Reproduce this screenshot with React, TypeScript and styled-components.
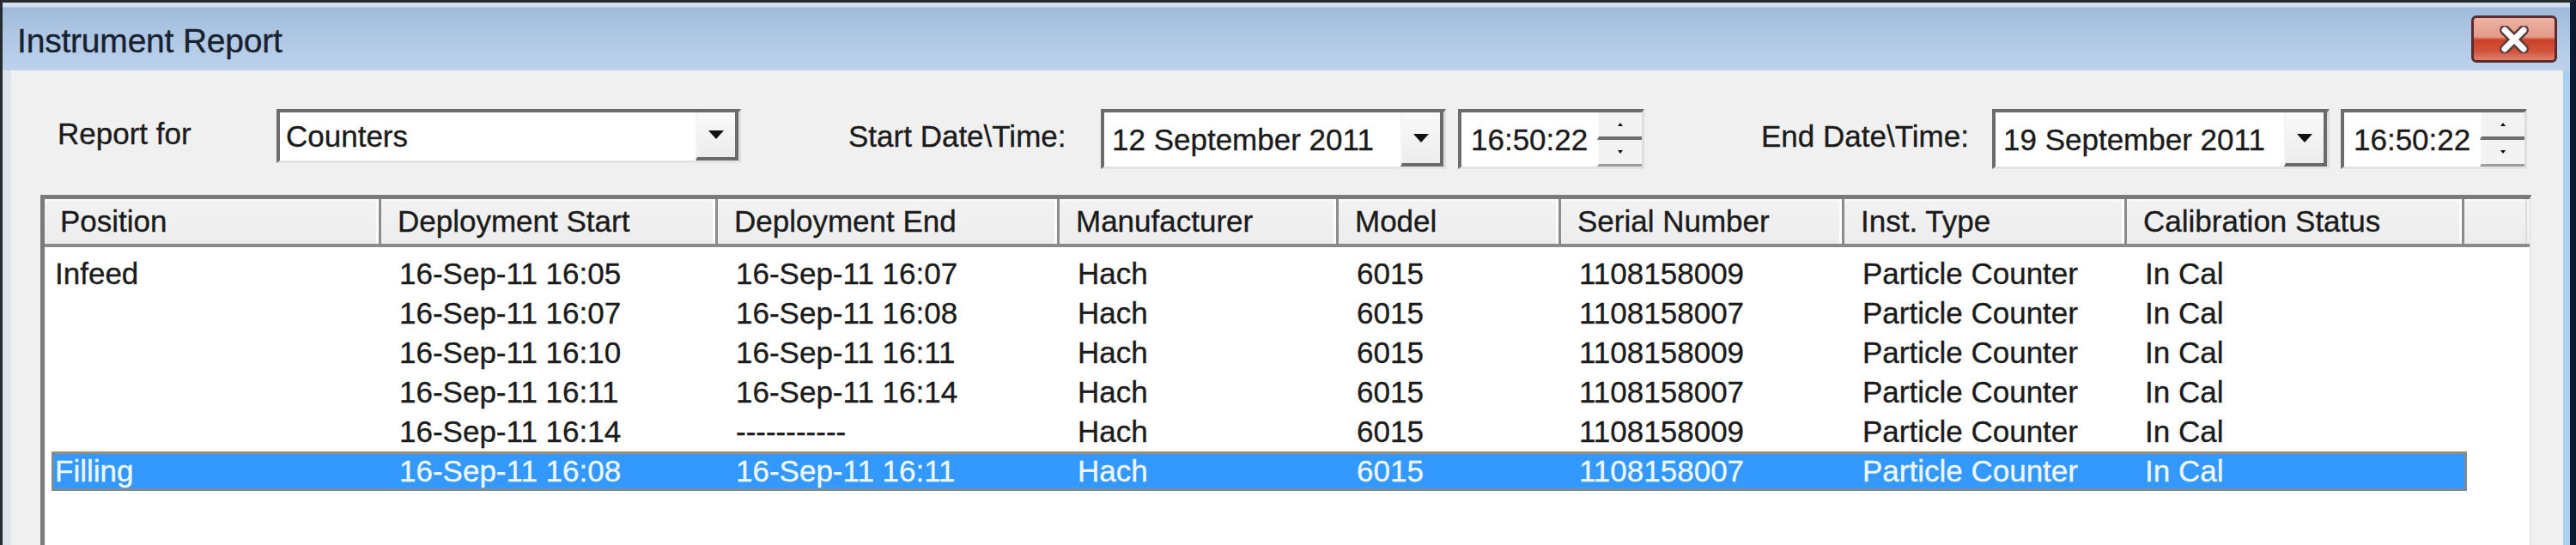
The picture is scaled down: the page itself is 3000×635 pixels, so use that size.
import React from 'react';
import styled, { createGlobalStyle } from 'styled-components';

const GlobalStyle = createGlobalStyle`
  html, body {
    margin: 0;
    padding: 0;
    background: #f0f0f0;
  }
  body {
    width: 3000px;
    height: 635px;
    overflow: hidden;
    font-family: 'Liberation Sans', Arial, sans-serif;
    -webkit-text-stroke: 0.35px currentColor;
  }
`;

const Window = styled.div`
  width: 3000px;
  height: 635px;
  box-sizing: border-box;
  border-top: 3px solid #262b31;
  border-left: 3px solid #262b31;
  border-right: 7px solid #0b1a33;
  display: flex;
  flex-direction: column;
  overflow: hidden;
`;

const TitleBar = styled.div`
  flex: none;
  height: 79px;
  box-sizing: border-box;
  padding: 6px 15px 0 17px;
  display: flex;
  align-items: center;
  justify-content: space-between;
  background: linear-gradient(
    180deg,
    #d5e0ec 0px,
    #d5e0ec 5px,
    #9fbadb 6px,
    #adc6e3 45%,
    #bdd3ec 100%
  );
`;

const Title = styled.span`
  font-size: 39px;
  color: #18212e;
  margin-top: 4px;
  letter-spacing: -0.2px;
`;

const CloseButton = styled.div`
  width: 100px;
  height: 55px;
  box-sizing: border-box;
  border: 3px solid #5b2b2e;
  border-radius: 6px;
  display: flex;
  align-items: center;
  justify-content: center;
  background: linear-gradient(
    180deg,
    #eeb2a4 0%,
    #e39a89 45%,
    #cc3f27 52%,
    #d2543d 80%,
    #e08470 100%
  );
`;

const Body = styled.div`
  flex: 1;
  display: flex;
  min-height: 0;
`;

const Frame = styled.div<{ $side: 'left' | 'right' }>`
  flex: none;
  width: ${(p) => (p.$side === 'left' ? '10px' : '8px')};
  background: ${(p) => (p.$side === 'left' ? '#dfe4ea' : '#a9d0f0')};
`;

const Content = styled.div`
  flex: 1;
  display: flex;
  flex-direction: column;
  background: #f0f0f0;
  padding-top: 45px;
  min-width: 0;
`;

const ControlsRow = styled.div`
  display: flex;
  align-items: flex-start;
  padding-left: 54px;
  font-size: 35px;
  color: #1b1b1b;
`;

const FieldLabel = styled.label<{ $width: number; $offset?: number; $height: number }>`
  flex: none;
  width: ${(p) => p.$width}px;
  height: ${(p) => p.$height}px;
  margin-left: ${(p) => p.$offset ?? 0}px;
  display: flex;
  align-items: center;
  padding-bottom: 6px;
  box-sizing: border-box;
  white-space: nowrap;
`;

const Sunken = styled.div<{ $width: number; $height: number; $offset?: number }>`
  flex: none;
  width: ${(p) => p.$width}px;
  height: ${(p) => p.$height}px;
  margin-left: ${(p) => p.$offset ?? 0}px;
  box-sizing: border-box;
  background: #fff;
  border-top: 4px solid #6c6c6c;
  border-left: 4px solid #6c6c6c;
  border-right: 3px solid #dedede;
  border-bottom: 3px solid #e4e4e4;
  display: flex;
  align-items: stretch;
`;

const FieldText = styled.span<{ $pad: number }>`
  flex: 1;
  display: flex;
  align-items: center;
  padding-left: ${(p) => p.$pad}px;
  white-space: nowrap;
  overflow: hidden;
`;

const DropButton = styled.div`
  flex: none;
  width: 50px;
  box-sizing: border-box;
  background: linear-gradient(180deg, #fafafa, #ececec);
  border-left: 2px solid #f4f4f4;
  border-right: 4px solid #6a6a6a;
  border-bottom: 4px solid #6a6a6a;
  display: flex;
  align-items: center;
  justify-content: center;
`;

const DownArrow = styled.span<{ $size: number }>`
  width: 0;
  height: 0;
  border-left: ${(p) => p.$size}px solid transparent;
  border-right: ${(p) => p.$size}px solid transparent;
  border-top: ${(p) => p.$size + 1}px solid #111;
`;

const UpArrow = styled.span<{ $size: number }>`
  width: 0;
  height: 0;
  border-left: ${(p) => p.$size}px solid transparent;
  border-right: ${(p) => p.$size}px solid transparent;
  border-bottom: ${(p) => p.$size + 1}px solid #111;
`;

const Spinner = styled.div`
  flex: none;
  width: 52px;
  display: flex;
  flex-direction: column;
`;

const SpinHalf = styled.div<{ $bottom: string }>`
  flex: 1;
  display: flex;
  align-items: center;
  justify-content: center;
  background: #f3f3f3;
  border-left: 2px solid #fbfbfb;
  border-bottom: ${(p) => p.$bottom};
`;

const ListView = styled.div`
  flex: 1;
  margin: 30px 37px 0 34px;
  background: #fff;
  border-top: 5px solid #7a7a7a;
  border-left: 5px solid #7a7a7a;
  border-right: 2px solid #e6e6e6;
  display: flex;
  flex-direction: column;
  font-size: 35px;
  color: #1b1b1b;
`;

const HeaderRow = styled.div`
  display: grid;
  grid-template-columns: 392px 392px 398px 325px 259px 330px 329px 393px 1fr;
  height: 56px;
  box-sizing: border-box;
  background: linear-gradient(180deg, #fbfbfb 0, #f2f2f2 4px, #ededed 100%);
  border-bottom: 4px solid #8a8a8a;
`;

const HeaderCell = styled.div<{ $first?: boolean; $filler?: boolean }>`
  display: flex;
  align-items: center;
  padding-left: ${(p) => (p.$first ? 18 : 19)}px;
  box-sizing: border-box;
  white-space: nowrap;
  overflow: hidden;
  border-right: ${(p) => (p.$filler ? '2px solid #dcdcdc' : '3px solid #8c8c8c')};
  box-shadow: ${(p) => (p.$filler ? 'none' : 'inset -3px 0 0 #fdfdfd')};
  margin-right: ${(p) => (p.$filler ? '3px' : '0')};
`;

const Rows = styled.div`
  padding-top: 8px;
  display: flex;
  flex-direction: column;
`;

const Row = styled.div<{ $selected?: boolean }>`
  display: grid;
  grid-template-columns: 381px 392px 398px 325px 259px 330px 329px 393px;
  width: max-content;
  height: 46px;
  box-sizing: border-box;
  margin-left: 8px;
  border: 3px solid ${(p) => (p.$selected ? '#7e8b97' : 'transparent')};
  border-top-color: ${(p) => (p.$selected ? '#968c7e' : 'transparent')};
  background: ${(p) => (p.$selected ? '#3399ff' : 'transparent')};
  color: ${(p) => (p.$selected ? '#eef7ff' : '#1b1b1b')};
`;

const Cell = styled.div<{ $first?: boolean }>`
  display: flex;
  align-items: center;
  padding-left: ${(p) => (p.$first ? 1 : 21)}px;
  white-space: nowrap;
  overflow: hidden;
`;

const columns = [
  'Position',
  'Deployment Start',
  'Deployment End',
  'Manufacturer',
  'Model',
  'Serial Number',
  'Inst. Type',
  'Calibration Status',
];

const rows = [
  ['Infeed', '16-Sep-11 16:05', '16-Sep-11 16:07', 'Hach', '6015', '1108158009', 'Particle Counter', 'In Cal'],
  ['', '16-Sep-11 16:07', '16-Sep-11 16:08', 'Hach', '6015', '1108158007', 'Particle Counter', 'In Cal'],
  ['', '16-Sep-11 16:10', '16-Sep-11 16:11', 'Hach', '6015', '1108158009', 'Particle Counter', 'In Cal'],
  ['', '16-Sep-11 16:11', '16-Sep-11 16:14', 'Hach', '6015', '1108158007', 'Particle Counter', 'In Cal'],
  ['', '16-Sep-11 16:14', '-----------', 'Hach', '6015', '1108158009', 'Particle Counter', 'In Cal'],
  ['Filling', '16-Sep-11 16:08', '16-Sep-11 16:11', 'Hach', '6015', '1108158007', 'Particle Counter', 'In Cal'],
];

function DatePicker({ value, width }: { value: string; width: number }) {
  return (
    <Sunken $width={width} $height={70}>
      <FieldText $pad={9}>{value}</FieldText>
      <DropButton>
        <DownArrow $size={9} />
      </DropButton>
    </Sunken>
  );
}

function TimeBox({ value, offset }: { value: string; offset: number }) {
  return (
    <Sunken $width={217} $height={70} $offset={offset}>
      <FieldText $pad={11}>{value}</FieldText>
      <Spinner>
        <SpinHalf $bottom="4px solid #6e6e6e">
          <UpArrow $size={3} />
        </SpinHalf>
        <SpinHalf $bottom="3px solid #9a9a9a">
          <DownArrow $size={3} />
        </SpinHalf>
      </Spinner>
    </Sunken>
  );
}

export default function App() {
  return (
    <>
      <GlobalStyle />
      <Window>
        <TitleBar>
          <Title>Instrument Report</Title>
          <CloseButton>
            <svg width="40" height="32" viewBox="0 0 40 32">
              <path d="M9 5 L31 27 M31 5 L9 27" stroke="#5a3a3a" strokeWidth="12" strokeLinecap="round" />
              <path d="M9 5 L31 27 M31 5 L9 27" stroke="#ffffff" strokeWidth="7" strokeLinecap="round" />
            </svg>
          </CloseButton>
        </TitleBar>
        <Body>
          <Frame $side="left" />
          <Content>
            <ControlsRow>
              <FieldLabel $width={255} $height={63}>Report for</FieldLabel>
              <Sunken $width={541} $height={63}>
                <FieldText $pad={7}>Counters</FieldText>
                <DropButton>
                  <DownArrow $size={9} />
                </DropButton>
              </Sunken>
              <FieldLabel $width={294} $height={70} $offset={125}>Start Date\Time:</FieldLabel>
              <DatePicker value="12 September 2011" width={402} />
              <TimeBox value="16:50:22" offset={14} />
              <FieldLabel $width={269} $height={70} $offset={136}>End Date\Time:</FieldLabel>
              <DatePicker value="19 September 2011" width={393} />
              <TimeBox value="16:50:22" offset={13} />
            </ControlsRow>
            <ListView>
              <HeaderRow>
                {columns.map((c, i) => (
                  <HeaderCell key={c} $first={i === 0}>
                    {c}
                  </HeaderCell>
                ))}
                <HeaderCell $filler />
              </HeaderRow>
              <Rows>
                {rows.map((r, i) => (
                  <Row key={i} $selected={i === rows.length - 1}>
                    {r.map((v, j) => (
                      <Cell key={j} $first={j === 0}>
                        {v}
                      </Cell>
                    ))}
                  </Row>
                ))}
              </Rows>
            </ListView>
          </Content>
          <Frame $side="right" />
        </Body>
      </Window>
    </>
  );
}
